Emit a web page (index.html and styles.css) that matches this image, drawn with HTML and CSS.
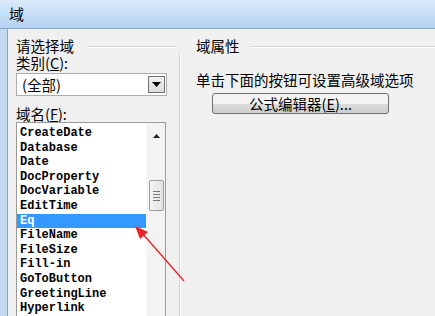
FILE: index.html
```html
<!DOCTYPE html>
<html lang="zh-CN">
<head>
    <meta charset="UTF-8">
    <title>域</title>
    <link rel="stylesheet" href="styles.css">
</head>
<body>
<div class="window">
    <div class="titlebar">域</div>
    <div class="frame">
        <div class="dialog">
            <div class="pane-left">
                <div class="group-head"><span>请选择域</span><i class="rule"></i></div>
                <div class="group-body">
                    <div class="label">类别(<u>C</u>):</div>
                    <div class="combo">
                        <span class="combo-text">(全部)</span>
                        <span class="combo-btn">
                            <svg width="9" height="5" viewBox="0 0 9 5"><path d="M0 0h9L4.5 5z" fill="#000"/></svg>
                        </span>
                    </div>
                    <div class="label label-list">域名(<u>F</u>):</div>
                    <div class="listbox">
                        <ul class="items">
                            <li>CreateDate</li>
                            <li>Database</li>
                            <li>Date</li>
                            <li>DocProperty</li>
                            <li>DocVariable</li>
                            <li>EditTime</li>
                            <li class="selected">Eq</li>
                            <li>FileName</li>
                            <li>FileSize</li>
                            <li>Fill-in</li>
                            <li>GoToButton</li>
                            <li>GreetingLine</li>
                            <li>Hyperlink</li>
                        </ul>
                        <div class="scrollbar">
                            <div class="scroll-up">
                                <svg width="7" height="4" viewBox="0 0 7 4"><path d="M0 4h7L3.5 0z" fill="#222"/></svg>
                            </div>
                            <div class="thumb"><i></i><i></i><i></i><i></i></div>
                        </div>
                    </div>
                </div>
            </div>
            <div class="pane-right">
                <div class="group-head"><span>域属性</span><i class="rule"></i></div>
                <div class="hint">单击下面的按钮可设置高级域选项</div>
                <button class="btn">公式编辑器(<u>E</u>)...</button>
            </div>
        </div>
    </div>
    <!-- red annotation arrow drawn over the dialog -->
    <svg class="arrow" width="435" height="316" viewBox="0 0 435 316">
        <line x1="184" y1="281" x2="142" y2="233" stroke="#e8242a" stroke-width="1.3"/>
        <polygon points="135,226 148,232 140,239" fill="#e8242a"/>
    </svg>
</div>
</body>
</html>
```

FILE: styles.css
```css
html, body {
    margin: 0;
    padding: 0;
    height: 316px;
    overflow: hidden;
}

body {
    font-family: "Noto Sans CJK SC", "Liberation Sans", sans-serif;
    font-size: 14.5px;
    color: #000;
    background-color: #f0f0f0;
}

.window {
    position: relative;
    width: 435px;
    height: 316px;
    display: flex;
    flex-direction: column;
    overflow: hidden;
    background-color: #bfd8f3;
}

.titlebar {
    height: 28px;
    line-height: 28px;
    padding-left: 9px;
    font-size: 15px;
    border-bottom: 1px solid #8ba3bf;
    background: linear-gradient(#dcebfa, #c3dcf6 60%, #b4d2f2);
}

.frame {
    flex: 1;
    min-height: 0;
    display: flex;
    padding-left: 7px;
    background-color: #c2daf3;
}

.dialog {
    flex: 1;
    display: flex;
    padding: 8px 0 0 8px;
    border-left: 1px solid #8fa5bd;
    background-color: #f0f0f0;
}

.group-head {
    display: flex;
    align-items: center;
    height: 17px;
    line-height: 17px;
}

.rule {
    flex: 1;
    height: 0;
    margin-top: 3px;
    border-top: 1px solid #d5d5d5;
    border-bottom: 1px solid #fff;
}

.pane-left {
    width: 164px;
    display: flex;
    flex-direction: column;
}

.pane-left .rule {
    margin-left: 14px;
    margin-right: 4px;
}

.group-body {
    flex: 1;
    min-height: 0;
    display: flex;
    flex-direction: column;
    border-right: 1px solid #d0d0d0;
    box-shadow: 1px 0 0 #fff;
}

.label {
    height: 17px;
    line-height: 17px;
}

.label-list {
    margin-top: 9px;
}

.combo {
    margin-top: 2px;
    width: 149px;
    height: 21px;
    display: flex;
    align-items: center;
    background-color: #fff;
    border: 1px solid #abadb3;
}

.combo-text {
    flex: 1;
    padding-left: 5px;
}

.combo-btn {
    width: 17px;
    height: 17px;
    margin-right: 1px;
    display: flex;
    align-items: center;
    justify-content: center;
    border: 1px solid #707070;
    box-sizing: border-box;
    background: linear-gradient(#f2f2f2, #dcdcdc);
}

.listbox {
    flex: 1;
    min-height: 0;
    width: 148px;
    display: flex;
    overflow: hidden;
    background-color: #fff;
    border: 1px solid #9a9a9a;
    border-bottom: none;
}

.items {
    list-style: none;
    margin: 0;
    padding: 3px 0 0 0;
    width: 130px;
    font-family: "Liberation Mono", monospace;
    font-size: 12px;
    font-weight: bold;
    line-height: 14.6px;
}

.items li {
    padding-left: 3px;
}

.items .selected {
    background-color: #3399ff;
    color: #fff;
}

.scrollbar {
    width: 18px;
    display: flex;
    flex-direction: column;
    align-items: center;
    background-color: #f3f3f3;
    border-left: 1px solid #f8f8f8;
}

.scroll-up {
    height: 17px;
    width: 100%;
    display: flex;
    align-items: flex-end;
    justify-content: center;
    padding-bottom: 2px;
    box-sizing: border-box;
}

.thumb {
    margin-top: 40px;
    width: 15px;
    height: 31px;
    display: flex;
    flex-direction: column;
    align-items: center;
    justify-content: center;
    gap: 2px;
    border: 1px solid #9d9d9d;
    border-radius: 2px;
    box-sizing: border-box;
    background: linear-gradient(90deg, #f4f4f4, #e2e2e2);
}

.thumb i {
    display: block;
    width: 7px;
    height: 1px;
    background-color: #7a7a7a;
}

.pane-right {
    flex: 1;
    display: flex;
    flex-direction: column;
    align-items: flex-start;
    padding-left: 16px;
}

.pane-right .group-head {
    align-self: stretch;
}

.pane-right .rule {
    margin-left: 10px;
}

.hint {
    margin-top: 17px;
    line-height: 17px;
}

.btn {
    margin: 5px 0 0 16px;
    width: 177px;
    height: 21px;
    padding: 0;
    font-family: inherit;
    font-size: 14.5px;
    line-height: 19px;
    color: #000;
    border: 1px solid #707070;
    border-radius: 3px;
    background: linear-gradient(#f4f4f4 50%, #dddddd 50%, #cfcfcf);
}

.arrow {
    position: absolute;
    left: 0;
    top: 0;
    pointer-events: none;
}
```
